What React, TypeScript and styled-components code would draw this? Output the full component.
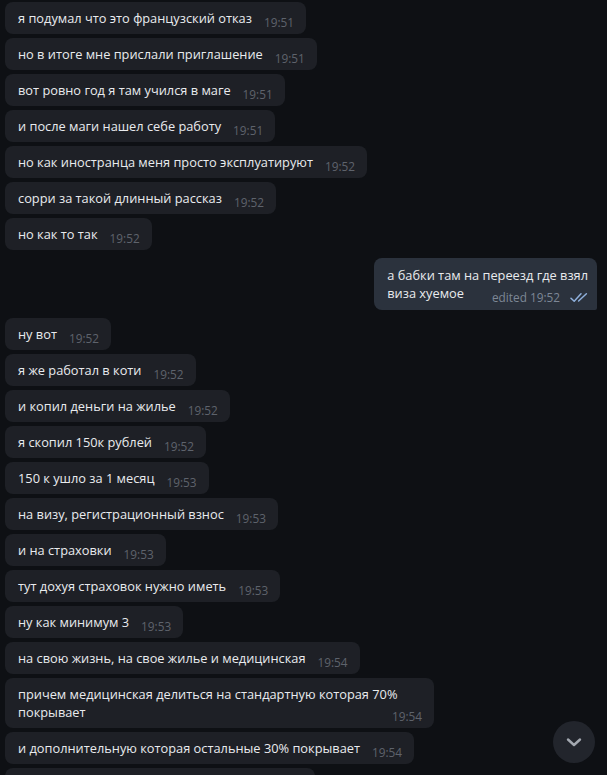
import * as React from 'react';
import styled, { createGlobalStyle } from 'styled-components';

const GlobalStyle = createGlobalStyle`
  html, body {
    margin: 0;
    padding: 0;
    background: #0e1014;
    overflow: hidden;
  }
`;

const Screen = styled.div`
  position: relative;
  width: 607px;
  height: 775px;
  overflow: hidden;
  background: #0e1014;
  font-family: 'Open Sans', 'Noto Sans', sans-serif;
  -webkit-font-smoothing: antialiased;
`;

const Feed = styled.div`
  display: flex;
  flex-direction: column;
  padding: 2px 10px 0 5px;
`;

const Group = styled.div<{ out?: boolean }>`
  display: flex;
  flex-direction: column;
  align-items: ${p => (p.out ? 'flex-end' : 'flex-start')};
  gap: 4px;
  margin-bottom: 8px;
`;

const Bubble = styled.div<{ out?: boolean }>`
  display: flow-root;
  box-sizing: border-box;
  max-width: 429px;
  height: ${p => (p.out ? 'auto' : 'auto')};
  padding: ${p => (p.out ? '8px 9px 8px 13px' : '7px 12px 7px 13px')};
  border-radius: ${p => (p.out ? '8px 8px 2px 8px' : '8px')};
  background: ${p => (p.out ? '#2b323d' : '#1e2026')};
  color: #e9ebee;
  font-size: 12.8px;
  line-height: 18px;
  white-space: pre-wrap;
`;

const Time = styled.span<{ out?: boolean }>`
  float: right;
  display: inline-flex;
  align-items: center;
  gap: 10px;
  margin: 4px 0 -4px 12px;
  font-size: 11.8px;
  line-height: 18px;
  color: ${p => (p.out ? '#7d8796' : '#5e636c')};
  white-space: nowrap;
`;

const ScrollDown = styled.button`
  position: absolute;
  left: 553px;
  top: 721px;
  width: 42px;
  height: 42px;
  border: none;
  border-radius: 50%;
  background: #22252c;
  display: flex;
  align-items: center;
  justify-content: center;
  padding: 0;
`;

const Checks = () => (
  <svg width="18" height="11" viewBox="0 0 18 11" fill="none">
    <path d="M1 6.2L4.2 9.2L11 1.8" stroke="#8fb0dc" strokeWidth="1.5" strokeLinecap="round" strokeLinejoin="round" />
    <path d="M8.6 9L16.4 1.8" stroke="#8fb0dc" strokeWidth="1.5" strokeLinecap="round" strokeLinejoin="round" />
  </svg>
);

type Msg = { text: string; time: string };

const before: Msg[] = [
  { text: 'я подумал что это французский отказ', time: '19:51' },
  { text: 'но в итоге мне прислали приглашение', time: '19:51' },
  { text: 'вот ровно год я там учился в маге', time: '19:51' },
  { text: 'и после маги нашел себе работу', time: '19:51' },
  { text: 'но как иностранца меня просто эксплуатируют', time: '19:52' },
  { text: 'сорри за такой длинный рассказ', time: '19:52' },
  { text: 'но как то так', time: '19:52' },
];

const after: Msg[] = [
  { text: 'ну вот', time: '19:52' },
  { text: 'я же работал в коти', time: '19:52' },
  { text: 'и копил деньги на жилье', time: '19:52' },
  { text: 'я скопил 150к рублей', time: '19:52' },
  { text: '150 к ушло за 1 месяц', time: '19:53' },
  { text: 'на визу, регистрационный взнос', time: '19:53' },
  { text: 'и на страховки', time: '19:53' },
  { text: 'тут дохуя страховок нужно иметь', time: '19:53' },
  { text: 'ну как минимум 3', time: '19:53' },
  { text: 'на свою жизнь, на свое жилье и медицинская', time: '19:54' },
  { text: 'причем медицинская делиться на стандартную которая 70% покрывает', time: '19:54' },
  { text: 'и дополнительную которая остальные 30% покрывает', time: '19:54' },
  { text: 'так что в итоге все деньги ушли на это', time: '19:54' },
];

const App = () => {
  return (
    <Screen>
      <GlobalStyle />
      <Feed>
        <Group>
          {before.map((m, i) => (
            <Bubble key={i}>
              {m.text}
              <Time>{m.time}</Time>
            </Bubble>
          ))}
        </Group>
        <Group out>
          <Bubble out>
            {'а бабки там на переезд где взял\nвиза хуемое'}
            <Time out>
              edited 19:52
              <Checks />
            </Time>
          </Bubble>
        </Group>
        <Group>
          {after.map((m, i) => (
            <Bubble key={i}>
              {m.text}
              <Time>{m.time}</Time>
            </Bubble>
          ))}
        </Group>
      </Feed>
      <ScrollDown aria-label="scroll down">
        <svg width="18" height="12" viewBox="0 0 18 12" fill="none">
          <path d="M3 3.5L9 9L15 3.5" stroke="#a3a8b0" strokeWidth="2.4" strokeLinecap="round" strokeLinejoin="round" />
        </svg>
      </ScrollDown>
    </Screen>
  );
};

export default App;
